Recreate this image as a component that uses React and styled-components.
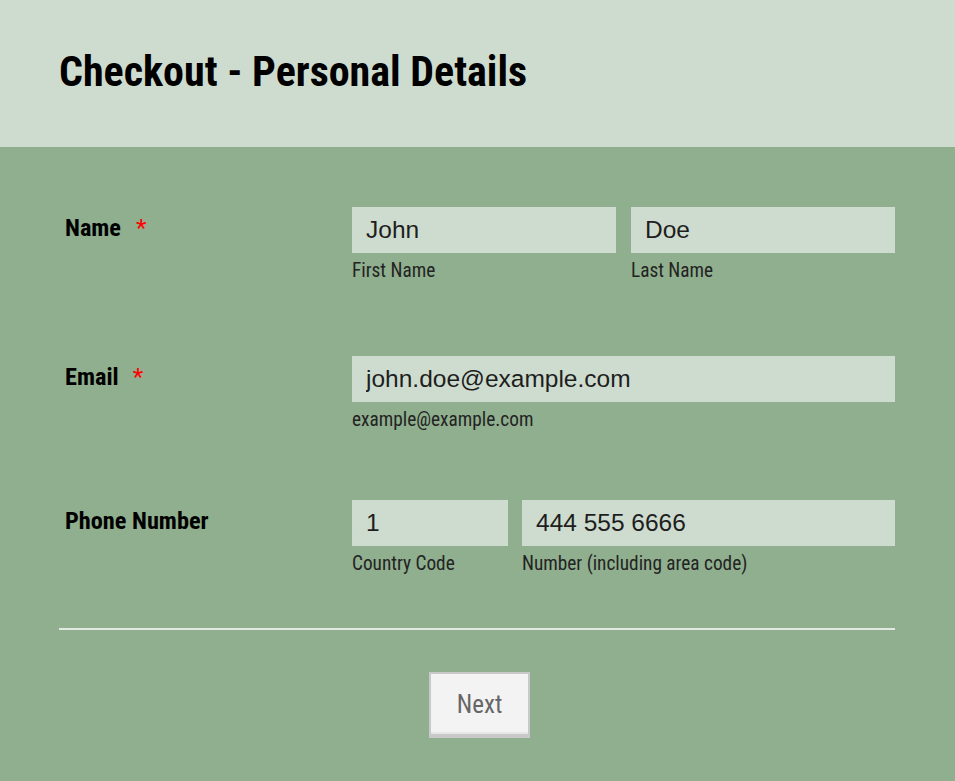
import React from 'react';
import styled, { createGlobalStyle } from 'styled-components';

const GlobalStyle = createGlobalStyle`
  html, body {
    margin: 0;
    padding: 0;
    background: #8faf8e;
  }
  body {
    font-family: Roboto, "Liberation Sans", sans-serif;
    font-stretch: condensed;
  }
`;

const Page = styled.div`
  min-height: 781px;
  background: #8faf8e;
`;

const Header = styled.header`
  height: 147px;
  background: #cedccf;
  display: flex;
  align-items: center;
  padding: 0 59px 5px;
  box-sizing: border-box;
`;

const Title = styled.h1`
  margin: 0;
  font-family: Roboto, sans-serif;
  font-stretch: condensed;
  font-weight: 700;
  font-size: 42px;
  color: #000;
`;

const Form = styled.form`
  padding: 60px 60px 0 59px;
`;

const Row = styled.div`
  display: flex;
  padding-bottom: ${(props) => props.gap}px;
`;

const Label = styled.label`
  width: 293px;
  flex: none;
  padding: 6px 0 0 6px;
  box-sizing: border-box;
  font-family: Roboto, sans-serif;
  font-stretch: condensed;
  font-weight: 700;
  font-size: 24.3px;
  color: #000;
`;

const Required = styled.span`
  color: #ff0000;
  margin-left: ${(props) => props.offset}px;
  font-weight: 400;
`;

const Fields = styled.div`
  flex: 1;
  display: flex;
  gap: ${(props) => props.gap || 14}px;
`;

const Field = styled.div`
  flex: 1;
  ${(props) => props.width && `flex: none; width: ${props.width}px;`}
  display: flex;
  flex-direction: column;
`;

const Input = styled.input`
  height: 46px;
  box-sizing: border-box;
  border: none;
  outline: none;
  background: #cedccf;
  padding: 0 14px;
  font-family: "Liberation Sans", Arial, sans-serif;
  font-size: 24.5px;
  color: #1e1e1e;
  width: 100%;
`;

const SubLabel = styled.span`
  margin-top: 7px;
  font-family: Roboto, sans-serif;
  font-stretch: condensed;
  font-size: 19.3px;
  line-height: 22px;
  color: #232323;
`;

const Divider = styled.hr`
  margin: 0;
  border: none;
  border-top: 2px solid #e2e9e2;
`;

const Actions = styled.div`
  display: flex;
  justify-content: center;
  padding-top: 42px;
`;

const Button = styled.button`
  width: 101px;
  height: 66px;
  margin-left: 5px;
  box-sizing: border-box;
  background: #f3f3f3;
  border: 2px solid #c9c9c9;
  border-bottom: 4px solid #c9c9c9;
  box-shadow: inset 0 -2px 0 #e6e6e6;
  font-family: Roboto, sans-serif;
  font-stretch: condensed;
  font-size: 25px;
  color: #666;
  cursor: pointer;
`;

const App = () => (
  <Page>
    <GlobalStyle />
    <Header>
      <Title>Checkout - Personal Details</Title>
    </Header>
    <Form onSubmit={(e) => e.preventDefault()}>
      <Row gap={74}>
        <Label>
          Name<Required offset={15}>*</Required>
        </Label>
        <Fields gap={15}>
          <Field>
            <Input defaultValue="John" />
            <SubLabel>First Name</SubLabel>
          </Field>
          <Field>
            <Input defaultValue="Doe" />
            <SubLabel>Last Name</SubLabel>
          </Field>
        </Fields>
      </Row>
      <Row gap={69}>
        <Label>
          Email<Required offset={14}>*</Required>
        </Label>
        <Fields>
          <Field>
            <Input defaultValue="john.doe@example.com" />
            <SubLabel>example@example.com</SubLabel>
          </Field>
        </Fields>
      </Row>
      <Row gap={53}>
        <Label>Phone Number</Label>
        <Fields>
          <Field width={156}>
            <Input defaultValue="1" />
            <SubLabel>Country Code</SubLabel>
          </Field>
          <Field>
            <Input defaultValue="444 555 6666" />
            <SubLabel>Number (including area code)</SubLabel>
          </Field>
        </Fields>
      </Row>
      <Divider />
      <Actions>
        <Button type="button">Next</Button>
      </Actions>
    </Form>
  </Page>
);

export default App;
